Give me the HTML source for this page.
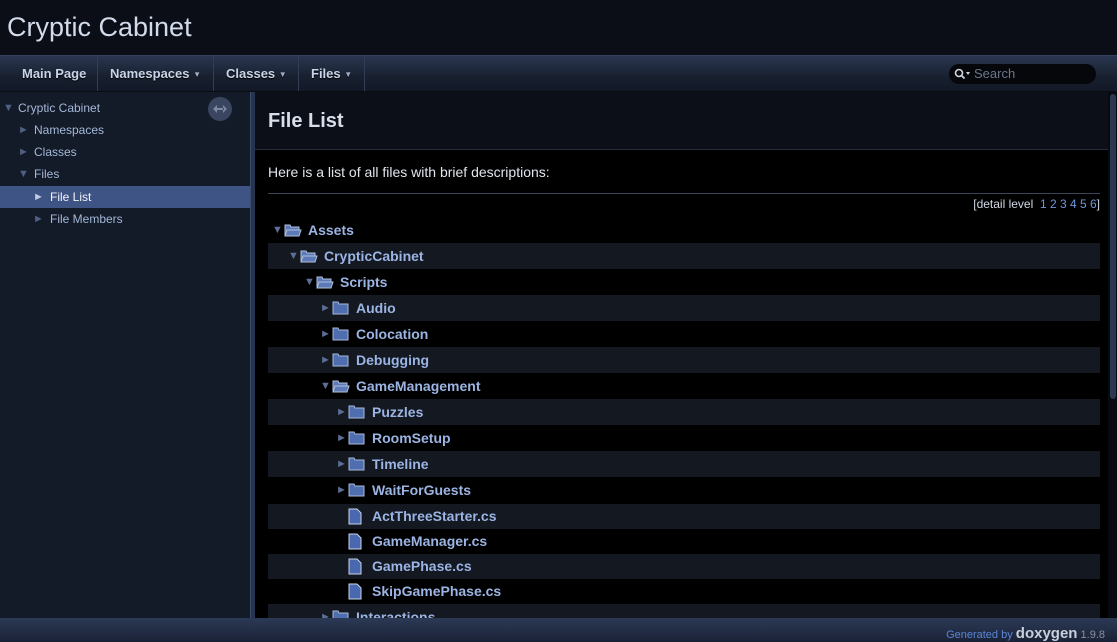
<!DOCTYPE html>
<html style="overflow:hidden;width:1117px;height:642px"><head><meta charset="utf-8"><style>
*{margin:0;padding:0;box-sizing:border-box}
body{width:1117px;height:642px;overflow:hidden;background:#000;font-family:"Liberation Sans",Arial,sans-serif;position:relative}
#top{position:absolute;left:0;top:0;width:1117px;height:55px;background:#0b0e16}
#top h1{position:absolute;left:7px;top:12px;font-weight:normal;font-size:27px;color:#d2dbeb}
#nav{position:absolute;left:0;top:55px;width:1117px;height:37px;background:linear-gradient(#2a3650,#18202f 60%,#121826);border-top:1px solid #34425e;border-bottom:1px solid #0a0d14}
#nav .it{position:absolute;top:0;height:35px;line-height:35px;font-size:13px;font-weight:bold;color:#c8d4e8;text-shadow:0 1px 1px #000;border-right:1px solid #323e58;padding-left:12px}
#nav .c{font-size:8px;color:#a0aec8;vertical-align:1px}
#search{position:absolute;left:949px;top:8px;width:147px;height:20px;border-radius:10px;background:#05070b;color:#6c778a;font-size:13px;line-height:20px;padding-left:25px}
#side{position:absolute;left:0;top:92px;width:250px;height:526px;background:#131a28}
#side div{position:absolute;font-size:12px;color:#a4b8d8;height:22px;line-height:22px}
#side .tri{color:#506082;font-size:11px}
#sel{left:0!important;width:250px;background:#3d5484;color:#f2f4f8!important}
#split{position:absolute;left:250px;top:92px;width:5px;height:526px;background:#26344f;border-left:1px solid #3c4c6c}
#content{position:absolute;left:255px;top:92px;width:853px;height:526px;background:#000;overflow:hidden}
#ch{height:58px;background:#0c0f18;border-bottom:1px solid #242c3c}
#ch h2{position:absolute;left:13px;top:18px;font-size:20px;color:#d8dfea}
#desc{position:absolute;left:13px;top:72px;font-size:14px;color:#e0e6ee}
#hr{position:absolute;left:13px;top:101px;width:832px;height:1px;background:#3a4658}
#lvl{position:absolute;right:8px;top:105px;font-size:12px;color:#d0d8e4}
#lvl span{color:#6f97dc}
.row{position:absolute;left:13px;width:832px;height:26px;line-height:26px;font-size:14px;font-weight:bold;color:#9cb4e4}
.row.a{background:#131821}
.row .ar{position:absolute;font-size:11px;color:#5c6e94;font-weight:normal}
.row svg{position:absolute;top:6px}
.row .t{position:absolute}
#scroll{position:absolute;left:1108px;top:92px;width:9px;height:526px;background:#070a10}
#scroll div{position:absolute;left:2px;top:2px;width:6px;height:305px;background:#2c3850;border-radius:3px}
#foot{position:absolute;left:0;top:618px;width:1117px;height:24px;background:linear-gradient(#2c3a56,#1a2236);font-size:11px;color:#5b86d6;text-align:right;padding-right:12px;line-height:31px;overflow:hidden}
#foot b{font-size:15px;color:#c8d0dc}
#foot .v{color:#8890a0}
</style></head><body>
<div id="top"><h1>Cryptic Cabinet</h1></div>
<div id="nav">
<div class="it" style="left:0;width:98px;padding-left:22px">Main Page</div>
<div class="it" style="left:98px;width:116px">Namespaces <span class="c">▼</span></div>
<div class="it" style="left:214px;width:85px">Classes <span class="c">▼</span></div>
<div class="it" style="left:299px;width:66px">Files <span class="c">▼</span></div>
<div id="search"><svg style="position:absolute;left:5px;top:4px" width="18" height="12" viewBox="0 0 18 12"><circle cx="5" cy="5" r="3.5" fill="none" stroke="#d0d6e0" stroke-width="1.6"/><path d="M7.5 7.5l3 3" stroke="#d0d6e0" stroke-width="1.8"/><path d="M12 4h4l-2 3z" fill="#d0d6e0"/></svg>Search</div>
</div>
<div id="side">
<div class="tri" style="left:3px;top:5px">▼</div><div style="left:18px;top:5px">Cryptic Cabinet</div>
<div style="left:208px;top:5px;width:24px;height:24px;border-radius:12px;background:#3a4560"><svg width="24" height="24" viewBox="0 0 24 24"><path d="M5 12l4-4v8zM19 12l-4-4v8zM8 11h8v2H8z" fill="#7a88a4"/></svg></div>
<div class="tri" style="left:18px;top:27px">►</div><div style="left:34px;top:27px">Namespaces</div>
<div class="tri" style="left:18px;top:49px">►</div><div style="left:34px;top:49px">Classes</div>
<div class="tri" style="left:18px;top:71px">▼</div><div style="left:34px;top:71px">Files</div>
<div id="sel" style="top:94px"><span style="position:absolute;left:33px;font-size:11px;color:#c0cae0">►</span><span style="position:absolute;left:50px">File List</span></div>
<div class="tri" style="left:33px;top:116px">►</div><div style="left:50px;top:116px">File Members</div>
</div>
<div id="split"></div>
<div id="content">
<div id="ch"><h2>File List</h2></div>
<div id="desc">Here is a list of all files with brief descriptions:</div>
<div id="hr"></div>
<div id="lvl">[detail level &nbsp;<span>1 2 3 4 5 6</span>]</div>
<div id="rows"></div>
</div>
<div id="scroll"><div></div></div>
<div id="foot">Generated by <b>doxygen</b> <span class="v">1.9.8</span></div>
<script>
var R=[[0,'Assets','o'],[1,'CrypticCabinet','o'],[2,'Scripts','o'],[3,'Audio','c'],[3,'Colocation','c'],[3,'Debugging','c'],[3,'GameManagement','o'],[4,'Puzzles','c'],[4,'RoomSetup','c'],[4,'Timeline','c'],[4,'WaitForGuests','c'],[4,'ActThreeStarter.cs','f'],[4,'GameManager.cs','f'],[4,'GamePhase.cs','f'],[4,'SkipGamePhase.cs','f'],[3,'Interactions','c']];
var h='',y=125;
var fo='<svg width="18" height="14" viewBox="0 0 18 14"><path d="M1 2h5l1 2h8v9H1z" fill="#5c7ab8" stroke="#b0c0dc"/><path d="M3 7h14l-2 6H1z" fill="#5c7ab8" stroke="#b0c0dc"/></svg>';
var fc='<svg width="18" height="14" viewBox="0 0 18 14"><path d="M1 1h5l1 2h9v10H1z" fill="#4f6eb0" stroke="#a8b8d8"/></svg>';
var ff='<svg width="14" height="17" viewBox="0 0 14 17" style="top:4px"><path d="M1 1h8l4 4v11H1z" fill="#4a68b0" stroke="#c8d4ea"/></svg>';
R.forEach(function(r,i){var l=r[0],hh=r[2]=='f'?25:26;var x=4+16*l;
if(i==11)y+=1;
h+='<div class="row'+(i%2?' a':'')+'" style="top:'+y+'px;height:'+hh+'px;line-height:'+hh+'px">';
if(r[2]!='f')h+='<span class="ar" style="left:'+x+'px">'+(r[2]=='o'?'▼':'►')+'</span>';
h+='<span style="position:absolute;left:'+(x+12)+'px;top:0">'+(r[2]=='o'?fo:r[2]=='c'?fc:ff)+'</span>';
h+='<span class="t" style="left:'+(x+36)+'px">'+r[1]+'</span></div>';y+=hh;});
document.getElementById('rows').innerHTML=h;
</script>
</body></html>
